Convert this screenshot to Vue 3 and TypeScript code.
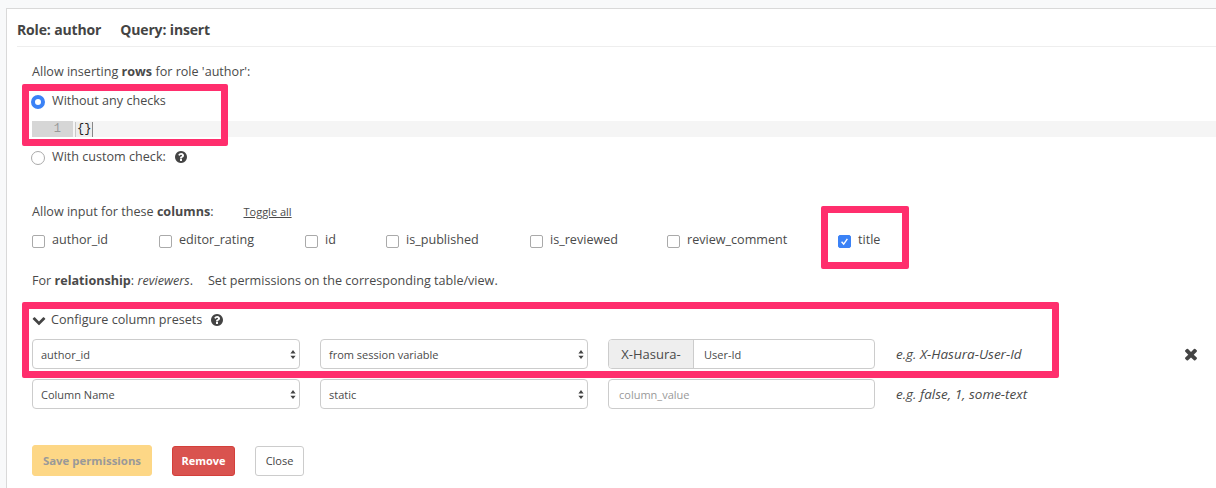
<script setup lang="ts">
const cols: { name: string; w: number; on?: boolean }[] = [
  { name: 'author_id', w: 127 },
  { name: 'editor_rating', w: 146 },
  { name: 'id', w: 81 },
  { name: 'is_published', w: 144 },
  { name: 'is_reviewed', w: 137 },
  { name: 'review_comment', w: 171 },
  { name: 'title', w: 80, on: true }
]
const qPath = 'M1024 1376v-192q0-14-9-23t-23-9h-192q-14 0-23 9t-9 23v192q0 14 9 23t23 9h192q14 0 23-9t9-23zm256-672q0-88-55.500-163t-138.500-116-170-41q-243 0-371 213-15 24 8 42l132 100q7 6 19 6 16 0 25-12 53-68 86-92 34-24 86-24 48 0 85.500 26t37.500 59q0 38-20 61t-68 45q-63 28-115.500 86.500t-52.500 125.500v36q0 14 9 23t23 9h192q14 0 23-9t9-23q0-19 21.500-49.500t54.500-49.500q32-18 49-28.500t46-35 44.500-48 28-60.500 12.500-81zm384 192q0 209-103 385.500t-279.500 279.500-385.500 103-385.500-103-279.500-279.500-103-385.500 103-385.500 279.500-279.500 385.500-103 385.500 103 279.500 279.500 103 385.500z'
const chevPath = 'M1683 808l-742 741q-19 19-45 19t-45-19l-742-741q-19-19-19-45.500t19-45.500l166-165q19-19 45-19t45 19l531 531 531-531q19-19 45-19t45 19l166 165q19 19 19 45.500t-19 45.500z'
const xPath = 'M1490 1322q0 40-28 68l-136 136q-28 28-68 28t-68-28l-294-294-294 294q-28 28-68 28t-68-28l-136-136q-28-28-28-68t28-68l294-294-294-294q-28-28-28-68t28-68l136-136q28-28 68-28t68 28l294 294 294-294q28-28 68-28t68 28l136 136q28 28 28 68t-28 68l-294 294 294 294q28 28 28 68z'
</script>

<template>
  <div class="page">
    <div class="panel">
      <div class="head"><b>Role: author</b><b>Query: insert</b></div>
      <div class="body">
        <div class="allow">Allow inserting <b>rows</b> for role 'author':</div>
        <label class="radio r1"><span class="rad on"></span>Without any checks</label>
        <div class="code"><span class="gutter">1</span><span class="brace">{}</span></div>
        <label class="radio r2"><span class="rad"></span>With custom check:
          <svg class="q" viewBox="0 0 1792 1792"><path :d="qPath" fill="#444"/></svg>
        </label>
        <div class="cols-title">Allow input for these <b>columns</b>:<a class="toggle">Toggle all</a></div>
        <div class="cols">
          <label v-for="c in cols" :key="c.name" class="col" :style="{ width: c.w + 'px' }">
            <span class="chk" :class="{ on: c.on }">
              <svg v-if="c.on" viewBox="0 0 12 12"><path d="M2.800 6.300l2.300 2.500 4-5.600" fill="none" stroke="#fff" stroke-width="1.500"/></svg>
            </span>{{ c.name }}
          </label>
        </div>
        <div class="rel">For <b>relationship</b>: <i>reviewers</i>.<span class="set">Set permissions on the corresponding table/view.</span></div>
        <div class="presets">
          <svg class="chev" viewBox="0 0 1792 1792"><path :d="chevPath" fill="#444"/></svg>
          Configure column presets
          <svg class="q" viewBox="0 0 1792 1792"><path :d="qPath" fill="#444"/></svg>
        </div>
        <div class="row first">
          <div class="sel"><span>author_id</span><svg viewBox="0 0 8 14"><path d="M4 1l3.500 4.500h-7zM4 13L.5 8.500h7z" fill="#444"/></svg></div>
          <div class="sel"><span>from session variable</span><svg viewBox="0 0 8 14"><path d="M4 1l3.500 4.500h-7zM4 13L.5 8.500h7z" fill="#444"/></svg></div>
          <div class="input group"><span class="addon">X-Hasura-</span><span class="val">User-Id</span></div>
          <i class="eg">e.g. X-Hasura-User-Id</i>
          <svg class="x" viewBox="0 0 1792 1792"><path :d="xPath" fill="#444"/></svg>
        </div>
        <div class="row second">
          <div class="sel"><span>Column Name</span><svg viewBox="0 0 8 14"><path d="M4 1l3.500 4.500h-7zM4 13L.5 8.500h7z" fill="#444"/></svg></div>
          <div class="sel"><span>static</span><svg viewBox="0 0 8 14"><path d="M4 1l3.500 4.500h-7zM4 13L.5 8.500h7z" fill="#444"/></svg></div>
          <div class="input"><span class="ph">column_value</span></div>
          <i class="eg">e.g. false, 1, some-text</i>
        </div>
        <div class="btns">
          <button class="save">Save permissions</button>
          <button class="remove">Remove</button>
          <button class="close">Close</button>
        </div>
      </div>
    </div>
    <div class="hl h1"></div>
    <div class="hl h2"></div>
    <div class="hl h3"></div>
  </div>
</template>

<style scoped>
.page {
  position: relative;
  width: 1216px;
  height: 488px;
  overflow: hidden;
  background: #f8f9fa;
  padding: 8px 0 0 6px;
  box-sizing: border-box;
  font-family: "Open Sans", sans-serif;
  font-size: 12.6px;
  color: #4a4a4a;
}
.panel {
  background: #fff;
  border-left: 1px solid #d9d9d9;
  border-top: 1px solid #d9d9d9;
  height: 480px;
  padding-left: 10px;
  box-sizing: border-box;
}
.head {
  height: 38px;
  box-sizing: border-box;
  padding-top: 13px;
  line-height: 16px;
  font-size: 14px;
  border-bottom: 1px solid #eee;
  display: flex;
  gap: 19px;
  color: #444;
  letter-spacing: -0.15px;
}
.body { padding-left: 15px; }
b { font-weight: 700; }
.allow { margin-top: 17px; line-height: 16px; }
.radio { display: flex; align-items: center; line-height: 16px; }
.r1 { margin-top: 13px; }
.r2 { margin-top: 12px; }
.rad {
  width: 14px;
  height: 14px;
  border-radius: 50%;
  border: 1px solid #aaa;
  box-sizing: border-box;
  margin: 1px 7px 0 -1px;
  background: #fff;
}
.rad.on { border: 4.500px solid #3b82f6; }
.code {
  margin-top: 12px;
  height: 16px;
  background: #f5f5f5;
  display: flex;
  align-items: center;
  font-family: "Liberation Mono", monospace;
  font-size: 12px;
  color: #222;
}
.gutter {
  width: 41px;
  height: 16px;
  background: #d6d6d6;
  color: #999;
  text-align: right;
  padding-right: 12px;
  box-sizing: border-box;
  line-height: 16px;
}
.brace {
  margin-left: 2px;
  padding: 0 1px;
  border-left: 1px solid #c8c8c8;
  border-right: 1px solid #888;
  background: #eee;
  line-height: 15px;
}
.q { width: 14px; height: 14px; margin-left: 8px; }
.cols-title { margin-top: 39px; line-height: 16px; display: flex; white-space: pre; }
.toggle { margin-left: 30px; font-size: 11px; text-decoration: underline; }
.cols { display: flex; margin-top: 12px; line-height: 16px; }
.col { display: flex; align-items: center; white-space: nowrap; }
.chk {
  width: 11px;
  height: 11px;
  border: 1px solid #aaa;
  border-radius: 2px;
  margin-top: 2px;
  margin-right: 7px;
  display: inline-flex;
  background: #fff;
}
.chk.on { background: #3b82f6; border-color: #3b82f6; }
.rel { margin-top: 25px; line-height: 16px; white-space: pre; display: flex; }
.set { margin-left: 15px; }
.presets {
  margin-top: 23px;
  line-height: 16px;
  display: flex;
  align-items: center;
}
.chev { width: 14px; height: 14px; margin-right: 5px; }
.row { display: flex; align-items: center; height: 30px; }
.first { margin-top: 11px; }
.second { margin-top: 10px; }
.sel, .input {
  height: 30px;
  box-sizing: border-box;
  border: 1px solid #ccc;
  border-radius: 4px;
  background: #fff;
  font-size: 11px;
}
.sel {
  width: 268px;
  margin-right: 20px;
  display: flex;
  align-items: center;
  justify-content: space-between;
  padding: 0 3px 0 8px;
}
.sel svg { width: 6px; height: 11px; }
.input { width: 267px; display: flex; align-items: center; }
.second .input { padding-left: 10px; }
.ph { color: #999; font-size: 11px; }
.addon {
  width: 84px;
  height: 28px;
  background: #eee;
  border-right: 1px solid #ccc;
  border-radius: 3px 0 0 3px;
  font-size: 13px;
  display: flex;
  align-items: center;
  justify-content: center;
}
.val { margin-left: 10px; }
.eg { margin-left: 21px; width: 286px; font-size: 13.5px; white-space: nowrap; }
.x { width: 18px; height: 18px; }
.btns { display: flex; align-items: center; margin-top: 36px; }
button {
  font: inherit;
  font-size: 11px;
  box-sizing: border-box;
  border-radius: 3px;
  padding: 0;
}
.save {
  width: 120px;
  height: 31px;
  background: #fdd786;
  border: 1px solid #fdd786;
  color: #999;
  font-weight: 700;
  font-size: 11.4px;
}
.remove {
  width: 63px;
  height: 30px;
  margin-left: 20px;
  background: #d9534f;
  border: 1px solid #d43f3a;
  color: #fff;
  font-weight: 700;
}
.close {
  width: 49px;
  height: 30px;
  margin-left: 20px;
  background: #fff;
  border: 1px solid #ccc;
  color: #444;
}
.hl {
  position: absolute;
  border: 7px solid #ff2e6d;
  border-radius: 2px;
  box-sizing: border-box;
}
.h1 { left: 22px; top: 84px; width: 206px; height: 62px; }
.h2 { left: 821px; top: 206px; width: 88px; height: 63px; }
.h3 { left: 22px; top: 302px; width: 1037px; height: 76px; }
</style>
